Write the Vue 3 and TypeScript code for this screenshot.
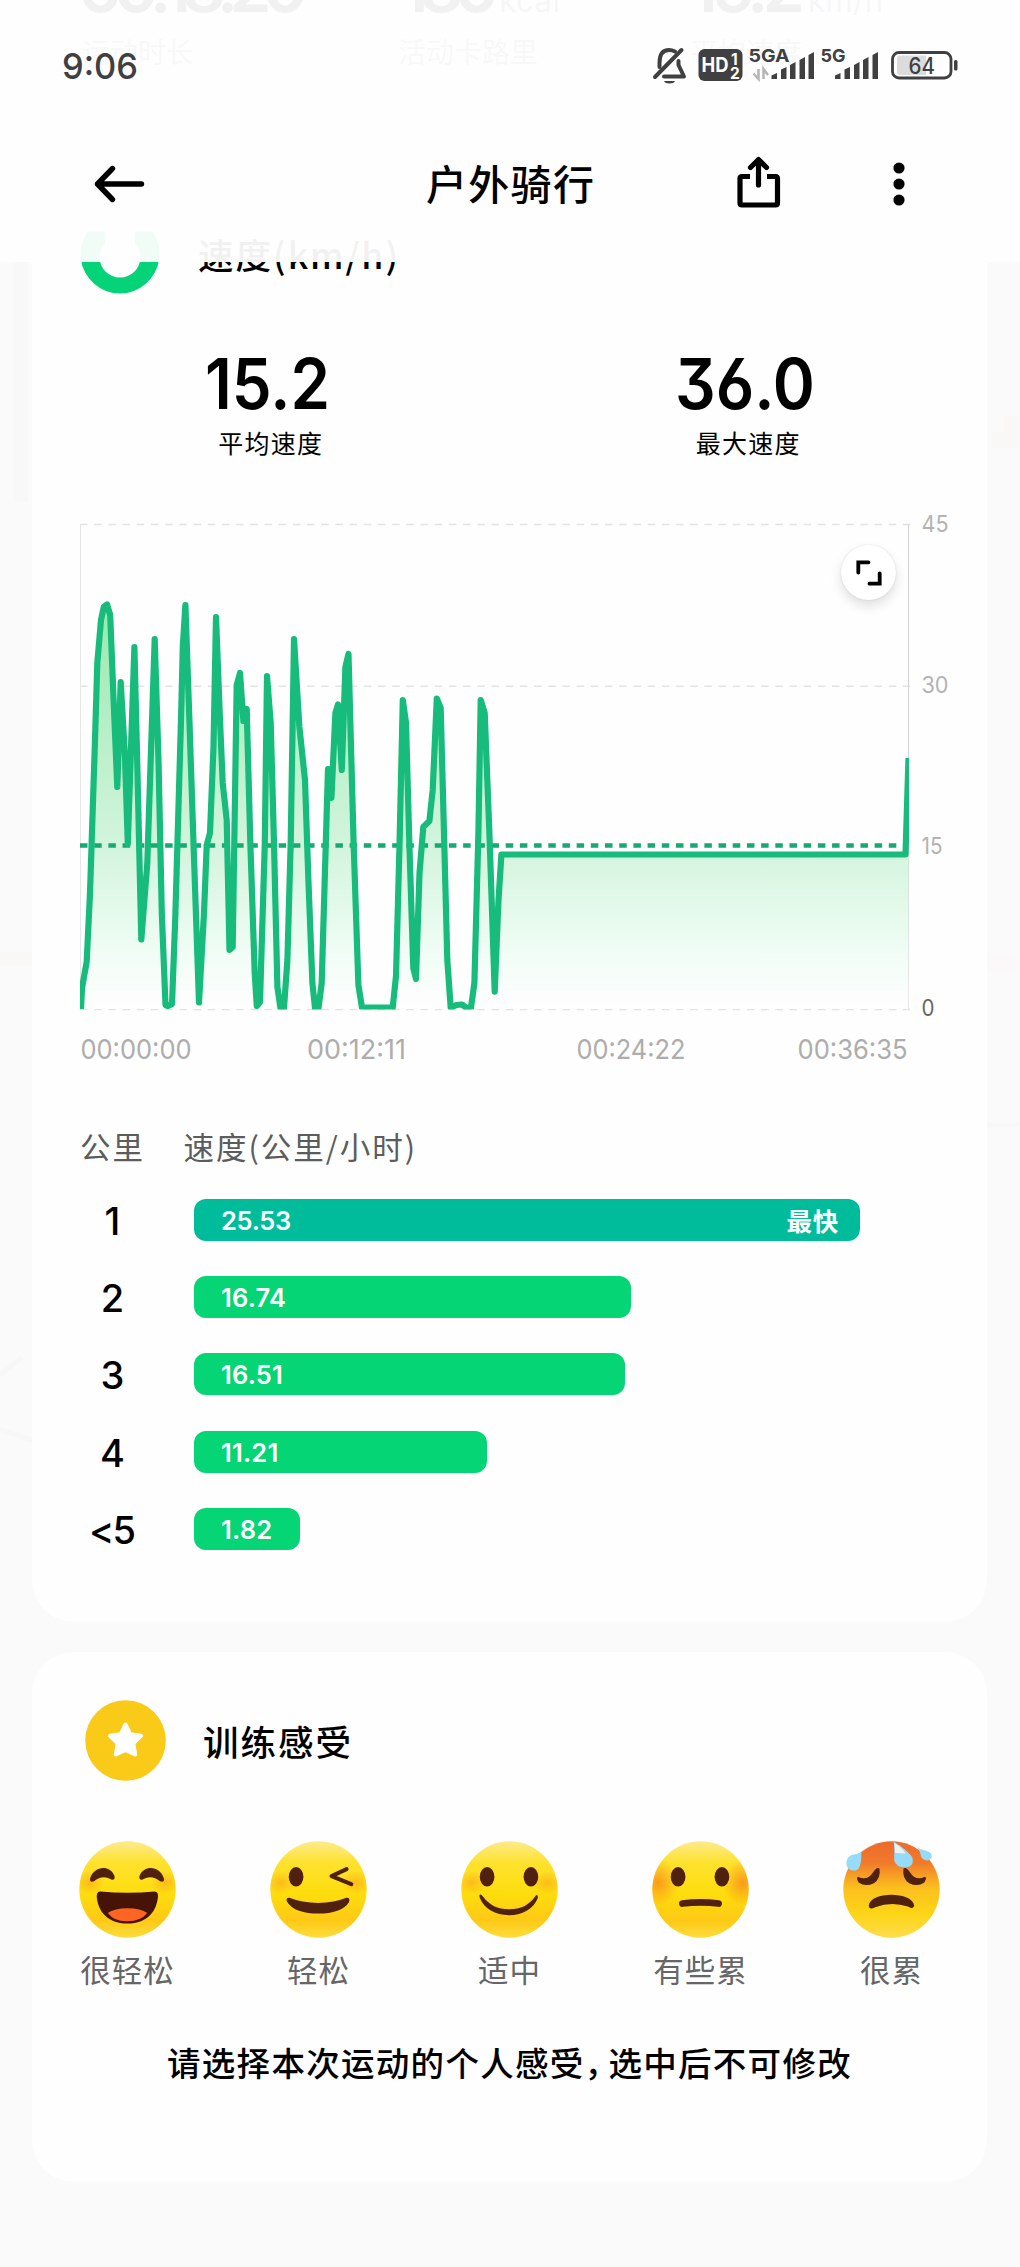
<script setup lang="ts">
interface Split {
  km: string
  speed: string
  width: number
  fastest?: boolean
}

interface Summary {
  value: string
  unit: string
  label: string
}

const summaries: Summary[] = [
  { value: '00:18:20', unit: '', label: '运动时长' },
  { value: '180', unit: 'kcal', label: '活动卡路里' },
  { value: '15.2', unit: 'km/h', label: '平均速度' },
]

const splits: Split[] = [
  { km: '1', speed: '25.53', width: 666, fastest: true },
  { km: '2', speed: '16.74', width: 437 },
  { km: '3', speed: '16.51', width: 431 },
  { km: '4', speed: '11.21', width: 293 },
  { km: '<5', speed: '1.82', width: 106 },
]

// Speed samples as [x, y] in chart space: the plot spans 48..876 by 24.5..509.
const samples: [number, number][] = [
  [49, 509], [50, 488], [54.7, 461.7], [58, 393], [63, 240], [65.3, 163], [69, 120], [71.8, 107], [75, 104.5], [78.2, 115],
  [81.3, 193], [85.3, 287], [88.7, 182], [93, 257], [95.8, 344], [102.4, 147], [105.5, 273], [109.3, 439.5], [115.3, 363],
  [122.7, 139], [126.5, 260], [129.8, 413], [133.5, 505], [136, 506], [140, 504], [143.3, 417], [149, 220], [150.8, 147],
  [153.4, 105], [157.4, 220], [161.5, 343], [167, 502.5], [172, 413], [174.7, 345], [178, 333], [181.5, 247], [184, 117],
  [188, 220], [190.7, 283], [194.7, 320], [197.5, 450], [200.7, 447], [204.7, 185], [208, 173], [211.4, 221], [214.7, 209],
  [218.4, 345], [222.7, 473], [224.8, 506], [228, 502], [232.8, 343], [235, 176], [238.7, 223], [242, 343], [245.4, 487],
  [248.5, 508], [252, 508], [255.4, 460], [258.7, 343], [262, 139], [267.4, 227], [273, 280], [276.4, 380], [280.4, 483],
  [283, 508], [286.5, 508], [289.7, 483], [293.8, 343], [296, 269], [299.4, 298], [303.4, 213], [306, 204.5], [309.8, 270],
  [313.4, 167], [316.5, 154], [321.7, 346], [326.4, 485], [330, 507.7], [360.7, 507.7], [364, 476], [367.5, 345], [370.8, 200],
  [374, 223], [377.4, 345], [381.3, 468], [384, 479], [387.5, 373], [391.3, 327], [397.4, 321], [400.7, 290], [404.8, 198.5],
  [408.7, 208], [412, 333], [415.3, 460], [418.7, 507.5], [424.5, 505], [430, 504.5], [434, 507.5], [439, 507.7], [442.4, 483],
  [446.4, 333], [448.7, 200], [452.7, 213], [457.4, 333], [462.7, 491.7], [466.5, 400], [469.4, 354.5], [873.5, 354.5], [876.5, 258],
]

const linePath = 'M' + samples.map(([x, y]) => `${x} ${y}`).join('L')
const areaPath = `${linePath}V509H48Z`

const yLabels = [
  { text: '45', y: 32.3, w: 27, dark: false },
  { text: '30', y: 193.3, w: 27, dark: false },
  { text: '15', y: 354, w: 21, dark: false },
  { text: '0', y: 516, w: 13, dark: true },
]

const xLabels = [
  { text: '00:00:00', x: 48.5, w: 111 },
  { text: '00:12:11', x: 275, w: 99 },
  { text: '00:24:22', x: 544.5, w: 109 },
  { text: '00:36:35', x: 765.5, w: 110 },
]

const faces = ['很轻松', '轻松', '适中', '有些累', '很累']
</script>

<template>
  <div class="page">
    <svg class="map" viewBox="0 0 1020 2267" aria-hidden="true">
      <rect x="14" y="262" width="14" height="240" fill="#f8f8f8" />
      <rect x="0" y="952" width="32" height="14" fill="#faf7f7" />
      <path d="M992 440h28M1004 424h16" stroke="#faf7f7" stroke-width="16" />
      <rect x="988" y="954" width="32" height="18" fill="#faf8f8" />
      <path d="M0 1375l22-18M0 1430l32 10M988 1125h32" stroke="#f7f7f7" stroke-width="5" />
    </svg>

    <header class="header">
      <div class="statusbar">
        <svg width="1020" height="110" viewBox="0 0 1020 110">
          <text class="num clock" x="62" y="79" textLength="76" lengthAdjust="spacingAndGlyphs">9:06</text>
          <g fill="none" stroke="#404040" stroke-width="4" stroke-linecap="round" stroke-linejoin="round">
            <path d="M655 77L681.500 50" />
            <path d="M659.500 67V63C659.500 54 663 50 669 50Q672 50 675 51.500" />
            <path d="M678.500 61V65L684 76.500H664" />
          </g>
          <path d="M664 81H675Q674 83.500 669.500 83.500T664 81Z" fill="#404040" />
          <rect x="698.500" y="49" width="44" height="32" rx="6" fill="#404040" />
          <text class="num" x="701.500" y="72" font-size="19.500" font-weight="700" fill="#fff" textLength="27" lengthAdjust="spacingAndGlyphs">HD</text>
          <text class="num" x="731" y="64.500" font-size="15.500" font-weight="700" fill="#fff">1</text>
          <text class="num" x="730" y="78.500" font-size="15.500" font-weight="700" fill="#fff">2</text>
          <text class="num" x="748.500" y="62" font-size="18" font-weight="700" fill="#404040" textLength="41" lengthAdjust="spacingAndGlyphs">5GA</text>
          <path d="M758.500 69V79L753.500 73.500M763.500 79V69L768 75" fill="none" stroke="#b5b5b5" stroke-width="2.500" />
          <g fill="#404040">
            <path d="M771.500 79V75.500L777 73V79ZM781 79V69.500L786.500 67V79ZM790 79V65L795.500 62V79ZM799.500 79V60L805 57V79ZM808.500 79V55L814 52V79Z" />
            <path d="M835 79V75.500L840.500 73V79ZM844.500 79V69.500L850 67V79ZM854 79V65L859.500 62V79ZM863 79V60L868.500 57V79ZM872.500 79V55L878 52V79Z" />
          </g>
          <text class="num" x="820.500" y="62" font-size="18" font-weight="700" fill="#404040" textLength="25" lengthAdjust="spacingAndGlyphs">5G</text>
          <rect x="892.500" y="52.500" width="58.500" height="25.500" rx="6.500" fill="#fff" stroke="#404040" stroke-width="2.800" />
          <path d="M900 55.500H926V75H900Q897 75 897 72V58.500Q897 55.500 900 55.500Z" fill="#dcdcdc" />
          <rect x="954" y="60" width="3.500" height="10.500" rx="1.500" fill="#404040" />
          <text class="num" x="908.500" y="73.500" font-size="22.500" font-weight="500" fill="#404040" textLength="26.500" lengthAdjust="spacingAndGlyphs">64</text>
        </svg>
      </div>
      <div class="navbar">
        <svg class="back" width="56" height="44" viewBox="0 0 56 44" fill="none" stroke="#000" stroke-width="5.400" stroke-linecap="round" stroke-linejoin="round">
          <path d="M21.500 6.500L6.500 22L21.500 37.500M6.500 22H50.500" />
        </svg>
        <h1>户外骑行</h1>
        <svg class="share" width="50" height="56" viewBox="0 0 50 56" fill="none" stroke="#000" stroke-width="5.200" stroke-linecap="round" stroke-linejoin="round">
          <path d="M24.500 31V7M16.500 13.500L24.500 5.500L32.500 13.500" />
          <path d="M16 22.500H8Q6 22.500 6 24.500V49Q6 51 8 51H41.500Q43.500 51 43.500 49V24.500Q43.500 22.500 41.500 22.500H33" stroke-linecap="butt" />
        </svg>
        <svg class="more" width="14" height="46" viewBox="0 0 14 46">
          <circle cx="7" cy="7" r="5.600" /><circle cx="7" cy="23" r="5.600" /><circle cx="7" cy="39" r="5.600" />
        </svg>
      </div>
    </header>

    <main class="content">
      <section class="summary">
        <div v-for="s in summaries" :key="s.label" class="summary-item">
          <div class="summary-value">{{ s.value }}<small v-if="s.unit">{{ s.unit }}</small></div>
          <div class="summary-label">{{ s.label }}</div>
        </div>
      </section>

      <section class="card speed">
        <div class="card-head speed-head">
          <svg width="80" height="80" viewBox="0 0 80 80">
            <path d="M7.500 16.500H25V28A20.500 20.500 0 1 0 55 28V16.500H72.500A39.500 39.500 0 1 1 7.500 16.500Z" fill="#05d377" />
          </svg>
          <h2>速度(km/h)</h2>
        </div>

        <div class="stats">
          <div class="stat">
            <svg class="stat-value" width="200" height="70" viewBox="0 0 200 70">
              <text class="num" x="34" y="60.500" textLength="125" lengthAdjust="spacingAndGlyphs">15.2</text>
            </svg>
            <span>平均速度</span>
          </div>
          <div class="stat">
            <svg class="stat-value flat" width="200" height="70" viewBox="0 0 200 70">
              <text class="num" x="27" y="60.500" textLength="140" lengthAdjust="spacingAndGlyphs">36.0</text>
            </svg>
            <span>最大速度</span>
          </div>
        </div>

        <div class="chart">
          <svg width="955" height="580" viewBox="0 0 955 580">
            <defs>
              <linearGradient id="area" gradientUnits="userSpaceOnUse" x1="0" y1="60" x2="0" y2="509">
                <stop offset="0" stop-color="#8ee7a6" />
                <stop offset="0.660" stop-color="#d5f5df" />
                <stop offset="0.880" stop-color="#f1fdf6" />
                <stop offset="1" stop-color="#fefefe" />
              </linearGradient>
              <clipPath id="plot"><rect x="48" y="20" width="829" height="489.500" /></clipPath>
            </defs>
            <g stroke="#e3e3e3" stroke-width="1.500" stroke-dasharray="7.500 6.690">
              <path d="M48 24.500H878M48 186.300H878M48 509.500H878" />
            </g>
            <path d="M48.500 24V509" stroke="#e6e6e6" />
            <path d="M876.500 24V509" stroke="#d2d2d2" />
            <g clip-path="url(#plot)">
              <path :d="areaPath" fill="url(#area)" />
              <path d="M48 345.500H876" stroke="#18a874" stroke-width="4.500" stroke-dasharray="7.500 6.690" />
              <path :d="linePath" fill="none" stroke="#17bb7c" stroke-width="6.200" stroke-linejoin="round" />
            </g>
            <text v-for="l in yLabels" :key="l.text" class="num ylabel" :class="{ dark: l.dark }" x="889.500" :y="l.y" :textLength="l.w" lengthAdjust="spacingAndGlyphs">{{ l.text }}</text>
            <text v-for="l in xLabels" :key="l.text" class="num xlabel" :x="l.x" y="558.500" :textLength="l.w" lengthAdjust="spacingAndGlyphs">{{ l.text }}</text>
          </svg>
          <button class="expand" aria-label="全屏">
            <svg width="28" height="28" viewBox="0 0 28 28" fill="none" stroke="#000" stroke-width="3.800" stroke-linecap="round" stroke-linejoin="miter">
              <path d="M3.300 13.500V3.300H13.500M24.700 14.500V24.700H14.500" />
            </svg>
          </button>
        </div>

        <div class="split-head"><span>公里</span><span>速度(公里/小时)</span></div>
        <div class="splits">
          <div v-for="s in splits" :key="s.km" class="split">
            <span class="num km">{{ s.km }}</span>
            <div class="bar" :class="{ fastest: s.fastest }" :style="{ width: s.width + 'px' }">
              <span class="num">{{ s.speed }}</span>
              <span v-if="s.fastest" class="tag">最快</span>
            </div>
          </div>
        </div>
      </section>

      <section class="card feeling">
        <div class="card-head">
          <svg width="81" height="81" viewBox="0 0 81 81">
            <circle cx="40.500" cy="40.500" r="40.300" fill="#f9ca17" />
            <path d="M40.500 24.500L45.300 34.300L56 35.800L48.300 43.300L50.200 54.500L40.500 50L30.800 54.500L32.700 43.300L25 35.800L35.700 34.300Z" fill="#fff" stroke="#fff" stroke-width="4" stroke-linejoin="round" />
          </svg>
          <h2>训练感受</h2>
        </div>

        <div class="faces">
          <div v-for="(name, i) in faces" :key="name" class="face">
            <svg width="97" height="97" viewBox="0 0 290 290">
              <defs>
                <linearGradient :id="'skin' + i" x1="0" y1="0" x2="0" y2="1">
                  <template v-if="i < 4">
                    <stop offset="0" stop-color="#fdeb8c" />
                    <stop offset="0.220" stop-color="#fde22e" />
                    <stop offset="0.550" stop-color="#fedd0c" />
                    <stop offset="0.820" stop-color="#fec916" />
                    <stop offset="1" stop-color="#fddc3a" />
                  </template>
                  <template v-else>
                    <stop offset="0" stop-color="#ee6a2c" />
                    <stop offset="0.220" stop-color="#f07a2a" />
                    <stop offset="0.480" stop-color="#fbbf1e" />
                    <stop offset="0.750" stop-color="#fdd516" />
                    <stop offset="1" stop-color="#fddc4a" />
                  </template>
                </linearGradient>
                <radialGradient :id="'blush' + i">
                  <stop offset="0" stop-color="#f98a1c" :stop-opacity="i === 3 ? 0.8 : 0.42" />
                  <stop offset="1" stop-color="#f98a1c" stop-opacity="0" />
                </radialGradient>
                <clipPath :id="'disc' + i"><circle cx="145" cy="145" r="144" /></clipPath>
              </defs>
              <circle cx="145" cy="145" r="144" :fill="`url(#skin${i})`" />
              <g v-if="i < 4" :clip-path="`url(#disc${i})`" :fill="`url(#blush${i})`">
                <ellipse :cx="i === 3 ? 18 : 32" cy="125" :rx="i === 3 ? 62 : 44" :ry="i === 3 ? 70 : 36" />
                <ellipse :cx="i === 3 ? 272 : 258" cy="125" :rx="i === 3 ? 62 : 44" :ry="i === 3 ? 70 : 36" />
              </g>

              <g v-if="i === 0" fill="#4f210e">
                <path d="M33 113C44 74 92 70 106 104Q109 117 98 116C82 104 61 106 45 120Q32 125 33 113Z" />
                <path d="M254 113C243 74 195 70 181 104Q178 117 189 116C205 104 226 106 242 120Q255 125 254 113Z" />
                <path d="M64 151Q145 158 226 151Q238 152 236 168C230 222 192 247 145 247S59 222 53 168Q52 151 64 151Z" fill="#451407" />
                <path d="M86 215Q105 201 145 201T204 215Q185 239 145 240T86 215Z" fill="#ff6522" />
              </g>
              <g v-else-if="i === 1">
                <ellipse cx="78" cy="107" rx="22" ry="29" fill="#4f210e" />
                <path d="M229 84L184 105L243 129" fill="none" stroke="#4f210e" stroke-width="12" stroke-linecap="round" stroke-linejoin="round" />
                <path d="M58 170Q95 185 144 185T228 170Q241 169 236 183C222 206 188 217 145 217S65 207 50 180Q48 168 58 170Z" fill="#4f210e" />
              </g>
              <g v-else-if="i === 2">
                <ellipse cx="78" cy="107" rx="22" ry="29" fill="#4f210e" />
                <ellipse cx="209" cy="107" rx="22" ry="29" fill="#4f210e" />
                <path d="M57 160Q61 159 65 165C85 192 109 204 144 204S203 192 222 165Q230 156 230 169C218 202 185 222 144 222S68 202 56 170Q54 162 57 160Z" fill="#4f210e" />
              </g>
              <g v-else-if="i === 3">
                <ellipse cx="78" cy="107" rx="22" ry="29" fill="#4f210e" />
                <ellipse cx="209" cy="107" rx="22" ry="29" fill="#4f210e" />
                <path d="M91 187Q145 180 199 187" fill="none" stroke="#4f210e" stroke-width="20" stroke-linecap="round" />
              </g>
              <g v-else>
                <path d="M45 107Q73 121 91 92Q101 76 109 82Q114 112 92 126Q67 138 47 124Q38 110 45 107ZM245 107Q217 121 199 92Q189 76 181 82Q176 112 198 126Q223 138 243 124Q252 110 245 107Z" fill="#4f210e" />
                <path d="M77 194C80 150 209 150 213 194Q208 205 194 196Q145 180 96 198Q79 207 77 194Z" fill="#4f210e" />
                <path d="M55 32Q56 87 35 89Q12 88 10 68Q11 47 26 42Q43 39 55 32Z" fill="#94dcfa" />
                <path d="M152 2Q190 25 207 48Q215 76 187 79Q158 78 153 58Q154 33 152 2Z" fill="#94dcfa" />
                <path d="M154 5Q179 23 187 37L156 36Z" fill="#f3f1ec" />
                <path d="M215 8Q222 24 249 29Q269 36 265 49Q255 64 242 55Q232 50 232 40Q229 27 215 8Z" fill="#94dcfa" />
              </g>
            </svg>
            <span>{{ name }}</span>
          </div>
        </div>

        <p class="hint">请选择本次运动的个人感受<span class="comma">，</span>选中后不可修改</p>
      </section>
    </main>
  </div>
</template>

<style>
body {
  margin: 0;
  background: #fafafa;
}
</style>

<style scoped>
.page {
  position: relative;
  width: 1020px;
  height: 2267px;
  overflow: hidden;
  background: #fafafa;
  color: #000;
  font-family: "Noto Sans CJK SC", sans-serif;
}
svg {
  display: block;
  flex: none;
}
.num {
  font-family: Inter, "Noto Sans CJK SC", sans-serif;
}
.map {
  position: absolute;
  inset: 0;
  width: 1020px;
  height: 2267px;
}

.header {
  position: absolute;
  z-index: 5;
  top: 0;
  left: 0;
  width: 1020px;
  height: 262px;
  background: rgba(254, 254, 254, 0.95);
}
.statusbar {
  height: 110px;
}
.clock {
  font-size: 36px;
  font-weight: 500;
  fill: #404040;
}
.navbar {
  display: flex;
  align-items: center;
  height: 147px;
  padding-left: 91px;
}
.navbar h1 {
  margin: 0 0 4px 279px;
  width: 310px;
  font-size: 41px;
  line-height: 60px;
  font-weight: 500;
  letter-spacing: 1.3px;
}
.share {
  margin-top: -4px;
  margin-left: -2px;
}
.more {
  margin-left: 108px;
}

.content {
  position: relative;
  display: flex;
  flex-direction: column;
  padding: 0 33px 0 32px;
}
.summary {
  display: flex;
  height: 184px;
  margin-top: -53px;
  padding-left: 50px;
}
.summary-item:nth-child(1) { width: 316px; }
.summary-item:nth-child(2) { width: 292px; }
.summary-value {
  height: 80px;
  margin-left: -4px;
  line-height: 80px;
  font-family: Inter, sans-serif;
  font-size: 68px;
  font-weight: 600;
  letter-spacing: -9px;
  white-space: nowrap;
}
.summary-item:nth-child(2) .summary-value { margin-left: 2px; }
.summary-item:nth-child(3) .summary-value {
  margin-left: -1px;
  letter-spacing: -6px;
}
.summary-value small {
  margin-left: 9px;
  font-size: 31px;
  font-weight: 400;
  letter-spacing: 0.5px;
  opacity: 0.6;
}
.summary-label {
  height: 40px;
  margin-top: 4px;
  line-height: 40px;
  font-size: 28px;
  opacity: 0.45;
}

.card {
  box-sizing: border-box;
  width: 955px;
  background: #fefefe;
  border-radius: 42px;
}
.speed {
  height: 1491px;
  padding-top: 84px;
}
.feeling {
  height: 530px;
  margin-top: 30px;
  padding-top: 48px;
}
.card-head {
  display: flex;
  align-items: center;
  padding-left: 53px;
}
.card-head h2 {
  margin: 0 0 0 37px;
  font-size: 35.5px;
  line-height: 50px;
  font-weight: 500;
  letter-spacing: 2px;
}
.speed-head {
  padding-left: 48px;
}
.speed-head h2 {
  margin: 0 0 2px 38px;
}

.stats {
  display: flex;
  margin-top: 53px;
}
.stat {
  display: flex;
  flex: 1;
  flex-direction: column;
  align-items: center;
}
.stat-value text {
  font-size: 69.5px;
  font-weight: 600;
}
.flat text {
  font-feature-settings: "cv09", "ss01";
}
.stat span {
  height: 40px;
  margin-top: 4px;
  margin-bottom: 2px;
  line-height: 40px;
  font-size: 25px;
  letter-spacing: 1.3px;
}

.chart {
  position: relative;
  height: 580px;
  margin-top: 36px;
}
.ylabel {
  font-size: 23px;
  fill: #b3b3b3;
}
.ylabel.dark {
  fill: #666;
}
.xlabel {
  font-size: 27px;
  fill: #adadad;
}
.expand {
  position: absolute;
  top: 45px;
  left: 809px;
  display: flex;
  align-items: center;
  justify-content: center;
  width: 55px;
  height: 55px;
  padding: 0;
  border: 0;
  border-radius: 50%;
  background: #fff;
  box-shadow: 0 6px 12px rgba(0, 0, 0, 0.12), 0 0 2px rgba(0, 0, 0, 0.12);
}

.split-head {
  display: flex;
  gap: 38.5px;
  height: 40px;
  margin-top: 46px;
  padding-left: 48px;
  font-size: 30.5px;
  line-height: 40px;
  letter-spacing: 2px;
  color: #5c5c5c;
}
.splits {
  display: flex;
  flex-direction: column;
  gap: 35.2px;
  margin-top: 33px;
}
.split {
  display: flex;
  height: 42px;
}
.km {
  width: 162px;
  box-sizing: border-box;
  padding-right: 3px;
  text-align: center;
  font-size: 38px;
  line-height: 45px;
  font-weight: 500;
  letter-spacing: -2px;
}
.bar {
  display: flex;
  box-sizing: border-box;
  justify-content: space-between;
  padding: 0 21px 0 27px;
  border-radius: 12px;
  background: #05d574;
  color: #fff;
  font-size: 25.5px;
  line-height: 44px;
  font-weight: 600;
}
.bar .num {
  letter-spacing: 0.2px;
}
.bar.fastest {
  background: #00bc9a;
}
.bar.fastest .num {
  letter-spacing: -0.3px;
}
.tag {
  line-height: 42px;
  font-weight: 600;
  letter-spacing: 0.8px;
}

.faces {
  display: flex;
  margin-top: 60px;
}
.face {
  display: flex;
  flex: 1;
  flex-direction: column;
  align-items: center;
}
.face span {
  height: 40px;
  margin-top: 11px;
  font-size: 30.5px;
  line-height: 40px;
  letter-spacing: 1px;
  color: #666;
}
.hint {
  margin: 53px 0 0;
  text-align: center;
  font-size: 33.5px;
  line-height: 40px;
  font-weight: 500;
  letter-spacing: 1.3px;
  white-space: nowrap;
}
.comma {
  margin-right: -11px;
}
</style>
